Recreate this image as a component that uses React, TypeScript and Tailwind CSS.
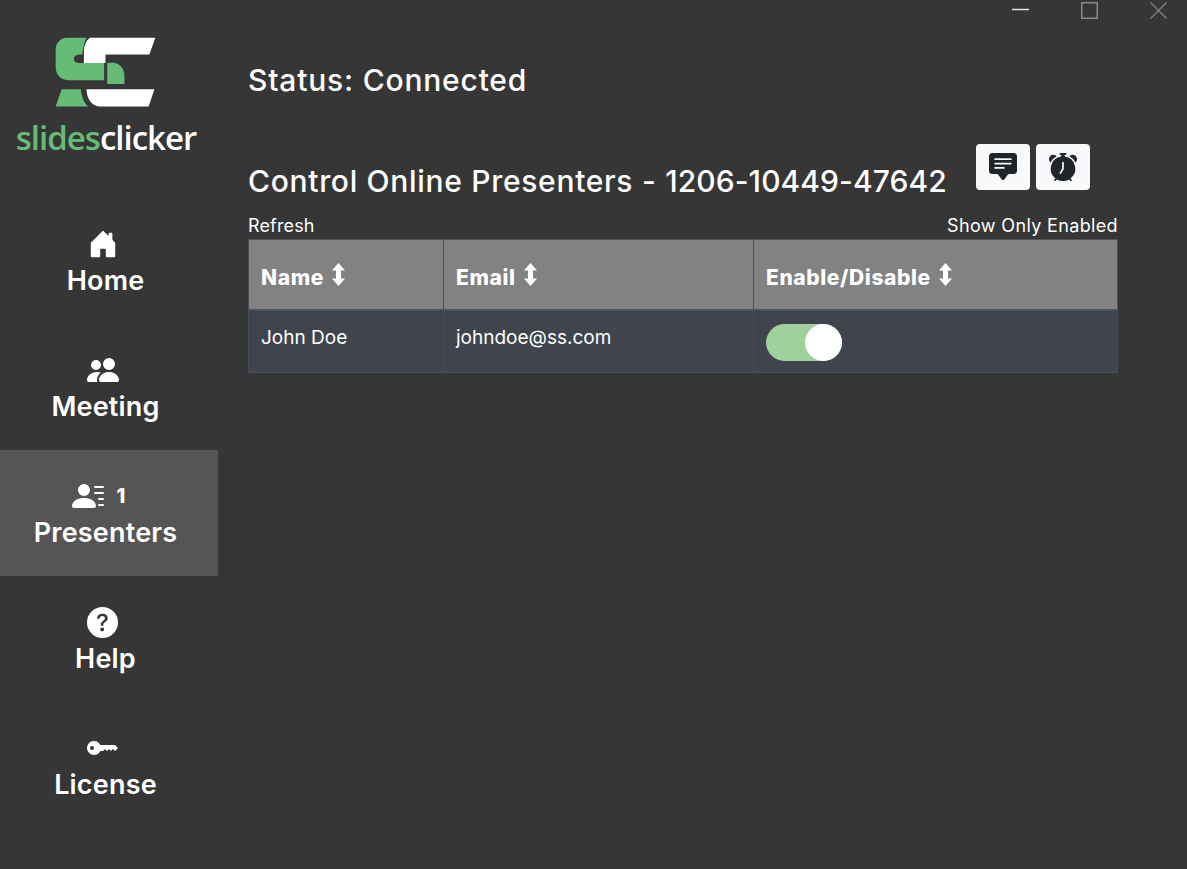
import { BsAlarmFill, BsChatSquareTextFill, BsHouseDoorFill, BsKeyFill, BsPeopleFill, BsPersonLinesFill, BsQuestionCircleFill } from 'react-icons/bs';
import type { ReactNode } from 'react';

const navItems: { label: string; icon: ReactNode; count?: number; active?: boolean }[] = [
  { label: 'Home', icon: <BsHouseDoorFill className="h-[30px] w-[30px]" /> },
  { label: 'Meeting', icon: <BsPeopleFill className="h-[32px] w-[32px]" /> },
  { label: 'Presenters', icon: <BsPersonLinesFill className="h-[32px] w-[32px]" />, count: 1, active: true },
  { label: 'Help', icon: <BsQuestionCircleFill className="h-[31px] w-[31px]" /> },
  { label: 'License', icon: <BsKeyFill className="h-[32px] w-[32px]" /> },
];

const columns = [
  { label: 'Name', width: 'w-[195px]' },
  { label: 'Email', width: 'w-[310px]' },
  { label: 'Enable/Disable', width: 'w-[364px]' },
];

function SortIcon() {
  return (
    <svg width="15" height="23" viewBox="0 0 15 23" className="mb-[6px]">
      <path fill="currentColor" d="M7.5 0L14 7.5H10V15.5H14L7.5 23L1 15.5H5V7.5H1Z" />
    </svg>
  );
}

function Logo() {
  return (
    <div className="flex h-[198px] flex-col items-center pt-[36px] pr-[6px]">
      <svg width="103" height="72" viewBox="160 50 310 216" className="mr-[2px]">
        <path
          fill="#66bb77"
          d="M258 55H200C178 55 165 72 165 92V143C165 167 182 183 205 183H311V131H240C226 131 220 127 220 118C220 110 226 105 240 105H245C248 85 250 68 258 55Z"
        />
        <path fill="#66bb77" d="M320 130H340C360 132 372 150 372 170V194H320Z" />
        <path fill="#66bb77" d="M183 210H241C243 234 250 250 263 262H165Z" />
        <path
          fill="#ffffff"
          d="M268 55H465L447 105H315V131H250V95C250 78 256 64 268 55Z"
        />
        <path fill="#ffffff" d="M258 210H462L445 262H300C275 262 258 240 258 210Z" />
      </svg>
      <div className="mt-[8px] font-['Open_Sans',sans-serif] text-[33px] leading-[44px] font-semibold tracking-[-1px]">
        <span className="text-[#66bb77]">slides</span>
        <span className="text-white">clicker</span>
      </div>
    </div>
  );
}

function WindowControls() {
  return (
    <div className="mr-[-49px] flex h-[20px] justify-end">
      <div className="flex gap-[52px] pt-[2px]">
        <svg width="17" height="17" viewBox="0 0 17 17">
          <path d="M0 7.5H17" stroke="#e4e4e4" strokeWidth="1.5" />
        </svg>
        <svg width="17" height="17" viewBox="0 0 17 17">
          <rect x="0.75" y="0.75" width="15.5" height="15.5" fill="none" stroke="#8a8a8a" strokeWidth="1.5" />
        </svg>
        <svg width="17" height="17" viewBox="0 0 17 17">
          <path d="M0.5 0.5L16.5 16.5M16.5 0.5L0.5 16.5" stroke="#7f7f7f" strokeWidth="1.3" />
        </svg>
      </div>
    </div>
  );
}

export default function App() {
  return (
    <div className="flex h-[869px] overflow-hidden bg-[#363636] font-['Inter',sans-serif] text-white">
      <aside className="w-[218px] shrink-0">
        <Logo />
        <nav>
          {navItems.map((item) => (
            <div
              key={item.label}
              className={`flex h-[126px] flex-col items-center pt-[29px] pr-[7px] ${item.active ? 'bg-[#555555]' : ''}`}
            >
              <div className="mr-[6px] flex h-[34px] items-center gap-[13px]">
                {item.icon}
                {item.count && <span className="mr-[8px] text-[20px] font-extrabold">{item.count}</span>}
              </div>
              <span className="mt-[2px] text-[27px] leading-[36px] font-semibold tracking-[0.2px]">{item.label}</span>
            </div>
          ))}
        </nav>
      </aside>

      <main className="flex-1 pr-[69px] pl-[30px]">
        <WindowControls />
        <h1 className="mt-[38px] text-[30px] leading-[44px] font-medium tracking-[0.8px]">Status: Connected</h1>
        <div className="mt-[42px] flex items-start justify-between">
          <h2 className="mt-[15px] text-[30px] leading-[44px] font-medium whitespace-nowrap">
            <span className="tracking-[0.69px]">Control Online Presenters - </span>
            <span className="tracking-[0.08px]">1206-10449-47642</span>
          </h2>
          <div className="mr-[28px] flex gap-[6px]">
            <button className="flex h-[46px] w-[54px] items-center justify-center rounded-[4px] bg-[#f8f9fa] text-[#212529]">
              <BsChatSquareTextFill className="h-[28px] w-[28px]" />
            </button>
            <button className="flex h-[46px] w-[54px] items-center justify-center rounded-[4px] bg-[#f8f9fa] text-[#212529]">
              <BsAlarmFill className="h-[28px] w-[28px]" />
            </button>
          </div>
        </div>
        <div className="mt-[9px] flex justify-between text-[18px] leading-[27px]">
          <span className="tracking-[0.15px]">Refresh</span>
          <span className="tracking-[0.35px]">Show Only Enabled</span>
        </div>
        <table className="w-[870px] table-fixed border-collapse">
          <thead>
            <tr className="h-[70px] bg-[#828282]">
              {columns.map((col) => (
                <th
                  key={col.label}
                  className={`border border-b-[2px] border-[#4b545c] pt-[6px] pl-[12px] text-left align-middle text-[21px] font-extrabold tracking-[0.6px] ${col.width}`}
                >
                  <span className="inline-flex items-center gap-[7px]">
                    {col.label}
                    <SortIcon />
                  </span>
                </th>
              ))}
            </tr>
          </thead>
          <tbody>
            <tr className="h-[63px] bg-[#40454d] text-[19px]">
              <td className="border border-[#484e56] pb-[6px] pl-[12px]">John Doe</td>
              <td className="border border-[#484e56] pb-[6px] pl-[12px]">johndoe@ss.com</td>
              <td className="border border-[#484e56] pt-[2px] pl-[12px]">
                <div className="flex h-[37px] w-[76px] justify-end rounded-full bg-[#a0d09c]">
                  <div className="h-[37px] w-[37px] rounded-full bg-white" />
                </div>
              </td>
            </tr>
          </tbody>
        </table>
      </main>
    </div>
  );
}
